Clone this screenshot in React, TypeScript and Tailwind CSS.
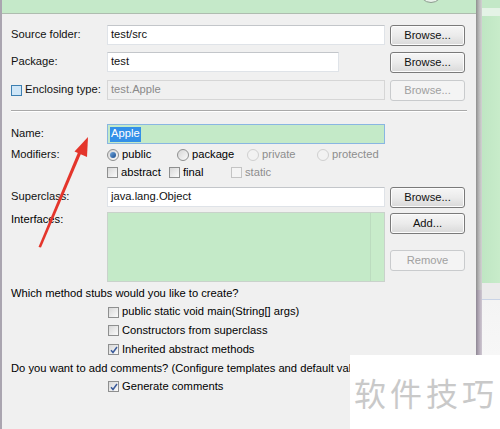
import React from "react";

const Btn = ({ label, disabled }: { label: string; disabled?: boolean }) => (
  <div
    className={
      disabled
        ? "h-[21px] w-[75px] flex items-center justify-center rounded-[3px] border border-[#c9cbcd] bg-[#f4f4f4] text-[#a0a0a0]"
        : "h-[21px] w-[75px] flex items-center justify-center rounded-[3px] border border-[#7a7a7a] bg-gradient-to-b from-[#f6f6f6] via-[#ebebeb] to-[#d9d9d9] text-[#111] shadow-[inset_0_0_0_1px_#fcfcfc]"
    }
  >
    {label}
  </div>
);

const Check = ({ checked, disabled, hot }: { checked?: boolean; disabled?: boolean; hot?: boolean }) => (
  <span
    className={
      hot
        ? "relative inline-flex w-[11px] h-[11px] shrink-0 border border-[#3c7fb1] bg-[#cfe6f7]"
        : disabled
        ? "relative inline-flex w-[11px] h-[11px] shrink-0 border border-[#c4c4c4] bg-[#f4f4f4]"
        : "relative inline-flex w-[11px] h-[11px] shrink-0 border border-[#8e8f8f] bg-gradient-to-br from-[#d8d8d8] to-[#fbfbfb]"
    }
  >
    {checked && (
      <svg className="absolute left-[1px] top-[1px]" width="8" height="8" viewBox="0 0 8 8">
        <path d="M1 4.2 L3 6.5 L7 1" stroke="#3a5a9a" strokeWidth="1.5" fill="none" />
      </svg>
    )}
  </span>
);

const Radio = ({ selected, disabled }: { selected?: boolean; disabled?: boolean }) => (
  <span
    className={
      disabled
        ? "inline-flex items-center justify-center w-[12px] h-[12px] shrink-0 rounded-full border border-[#cfcfcf] bg-[#f2f2f2]"
        : "inline-flex items-center justify-center w-[12px] h-[12px] shrink-0 rounded-full border border-[#8e8f8f] bg-gradient-to-br from-[#d6d6d6] to-[#fafafa]"
    }
  >
    {selected && <span className="w-[6px] h-[6px] rounded-full bg-gradient-to-br from-[#6fa6de] to-[#1d4f8f]" />}
  </span>
);

const Label = ({ children }: { children: React.ReactNode }) => (
  <div className="h-[20px] flex items-center text-[#111]">{children}</div>
);

const Input = ({ value, w }: { value: string; w?: string }) => (
  <div
    className={
      (w === "short" ? "w-[232px] " : "w-[278px] ") +
      "h-[20px] flex items-center pl-[3px] bg-white border border-[#dfe3e8] border-t-[#c3c6ca] text-[#111]"
    }
  >
    {value}
  </div>
);

export default function App() {
  return (
    <div className="relative w-[500px] h-[429px] overflow-hidden flex bg-white font-['Liberation_Sans',Arial,sans-serif] text-[11.2px] leading-none">
      {/* dialog */}
      <div className="w-[476px] h-full shrink-0 flex flex-col bg-[#f0f0f0] border-l-[2px] border-[#aaa5b0]">
        <div className="h-[14px] shrink-0 bg-[#c5e9c9] border-b border-[#aebcaf]" />
        <div className="flex flex-col pl-[9px] pr-[9px]">
          {/* Source folder */}
          <div className="mt-[11px] flex items-start">
            <div className="w-[96px]"><Label>Source folder:</Label></div>
            <div className="w-[283px]"><Input value="test/src" /></div>
            <Btn label="Browse..." />
          </div>
          {/* Package */}
          <div className="mt-[6px] flex items-start">
            <div className="w-[96px]"><Label>Package:</Label></div>
            <div className="w-[283px]"><Input value="test" w="short" /></div>
            <Btn label="Browse..." />
          </div>
          {/* Enclosing type */}
          <div className="mt-[7px] flex items-start">
            <div className="w-[96px] h-[20px] flex items-center gap-[3px]">
              <Check hot />
              <span className="text-[#111]">Enclosing type:</span>
            </div>
            <div className="w-[283px]">
              <div className="w-[278px] h-[20px] flex items-center pl-[3px] bg-[#f0f0f0] border border-[#d6d6d6] text-[#8a8a8a]">
                test.Apple
              </div>
            </div>
            <Btn label="Browse..." disabled />
          </div>
          {/* separator */}
          <div className="mt-[9px] w-[456px] h-[2px] border-t border-[#a9a9a9] border-b border-b-white" />
          {/* Name */}
          <div className="mt-[12px] flex items-start">
            <div className="w-[96px]"><Label>Name:</Label></div>
            <div className="w-[278px] h-[20px] flex items-center pl-[2px] bg-[#c4eac8] border border-[#89b6e2]">
              <span className="h-[15px] px-[1px] flex items-center bg-[#3390e8] text-white">Apple</span>
            </div>
          </div>
          {/* Modifiers */}
          <div className="mt-[2px] flex items-center h-[18px]">
            <div className="w-[96px] text-[#111]">Modifiers:</div>
            <div className="w-[70px] flex items-center gap-[3px]"><Radio selected /><span>public</span></div>
            <div className="w-[70px] flex items-center gap-[3px]"><Radio /><span>package</span></div>
            <div className="w-[70px] flex items-center gap-[3px]"><Radio disabled /><span className="text-[#8d8d8d]">private</span></div>
            <div className="w-[80px] flex items-center gap-[3px]"><Radio disabled /><span className="text-[#8d8d8d]">protected</span></div>
          </div>
          <div className="flex items-center h-[18px]">
            <div className="w-[96px]" />
            <div className="w-[62px] flex items-center gap-[3px]"><Check /><span>abstract</span></div>
            <div className="w-[62px] flex items-center gap-[3px]"><Check /><span>final</span></div>
            <div className="w-[62px] flex items-center gap-[3px]"><Check disabled /><span className="text-[#8d8d8d]">static</span></div>
          </div>
          {/* Superclass */}
          <div className="mt-[5px] flex items-start">
            <div className="w-[96px]"><Label>Superclass:</Label></div>
            <div className="w-[283px]"><Input value="java.lang.Object" /></div>
            <Btn label="Browse..." />
          </div>
          {/* Interfaces */}
          <div className="mt-[4px] flex items-start">
            <div className="w-[96px] h-[16px] flex items-center">Interfaces:</div>
            <div className="w-[283px]">
              <div className="w-[278px] h-[70px] flex bg-[#c4eac8] border border-[#c9d2cb]">
                <div className="flex-1" />
                <div className="w-[14px] h-full bg-[#c8ecca] border-l border-[#bcdcbf]" />
              </div>
            </div>
            <div className="flex flex-col pt-[1px] gap-[16px]">
              <Btn label="Add..." />
              <Btn label="Remove" disabled />
            </div>
          </div>
          {/* Method stubs */}
          <div className="mt-[2px] h-[19px] flex items-center">Which method stubs would you like to create?</div>
          <div className="h-[18px] flex items-center pl-[97px] gap-[3px]"><Check /><span>public static void main(String[] args)</span></div>
          <div className="h-[19px] flex items-center pl-[97px] gap-[3px]"><Check /><span>Constructors from superclass</span></div>
          <div className="h-[19px] flex items-center pl-[97px] gap-[3px]"><Check checked /><span>Inherited abstract methods</span></div>
          <div className="h-[19px] flex items-center whitespace-nowrap">Do you want to add comments? (Configure templates and default value here)</div>
          <div className="h-[17px] flex items-center pl-[97px] gap-[3px]"><Check checked /><span>Generate comments</span></div>
        </div>
      </div>
      {/* dialog frame edge */}
      <div className="w-[6px] h-full shrink-0 flex flex-col">
        <div className="h-[290px] bg-gradient-to-r from-[#8f8f8f] via-[#b9b9b9] to-[#d2d2d2]" />
        <div className="flex-1 bg-gradient-to-r from-[#8e8794] via-[#b4aab8] to-[#cfc8d2]" />
      </div>
      {/* background window */}
      <div className="flex-1 h-full flex flex-col">
        <div className="h-[8px] bg-[#c3e8c7]" />
        <div className="h-[8px] bg-[#e4f3e6]" />
        <div className="h-[267px] bg-gradient-to-r from-[#bfe6c3] to-[#c8ecca]" />
        <div className="h-[17px] bg-[#ebebeb] border-b border-[#c9d3e6]" />
        <div className="flex-1 bg-gradient-to-b from-[#f4f4f4] to-[#fbfbfb]" />
      </div>

      {/* help button circle peeking at top */}
      <div className="absolute left-[419px] top-[-21px] w-[24px] h-[24px] rounded-full border border-[#8d9a8f] bg-[#e9f2ea]" />

      {/* watermark */}
      <div className="absolute left-[350px] top-[355px] w-[150px] h-[74px] bg-white flex items-center pl-[4px]">
        <span className="text-[32px] tracking-[4px] text-[#c9c9c9] font-['Noto_Sans_CJK_SC',sans-serif] leading-none">软件技巧</span>
      </div>

      {/* red arrow */}
      <svg className="absolute left-0 top-0 pointer-events-none" width="500" height="429" viewBox="0 0 500 429">
        <polygon points="38.5,247 41,247.6 81.5,152.5 78.5,151.2" fill="#e4352b" />
        <polygon points="88,137 74.5,151.5 87,157" fill="#e4352b" />
      </svg>
    </div>
  );
}
